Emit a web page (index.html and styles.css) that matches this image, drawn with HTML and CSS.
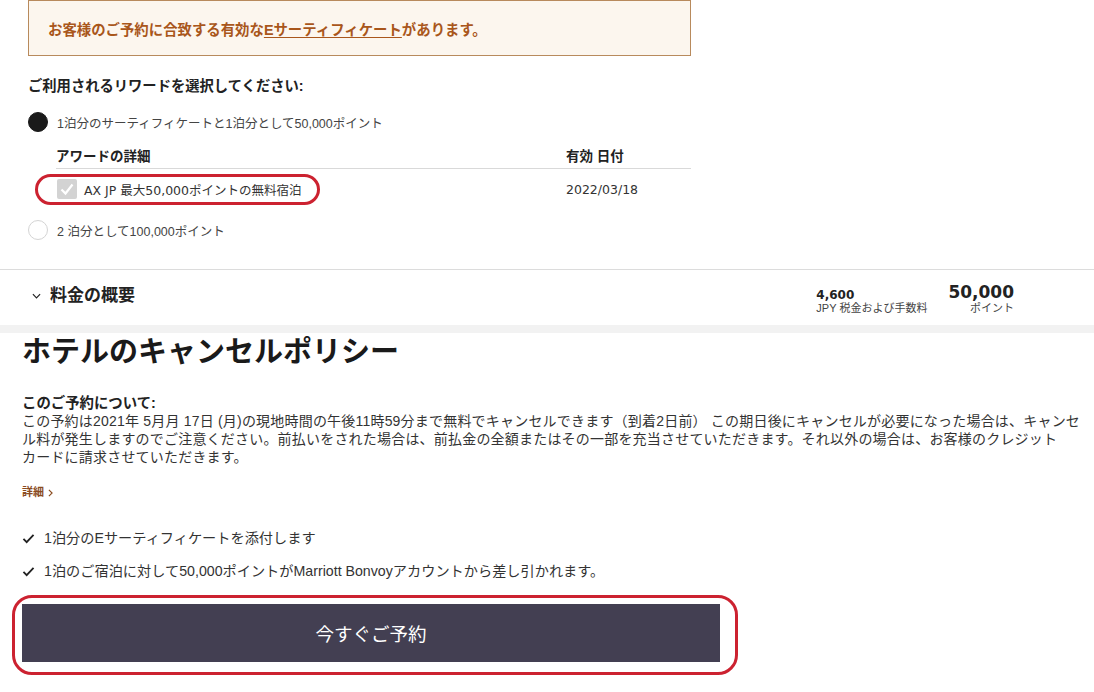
FILE: index.html
```html
<!DOCTYPE html>
<html lang="ja">
<head>
<meta charset="utf-8">
<link rel="stylesheet" href="styles.css">
</head>
<body>
<div class="page">
  <section class="rewards">
    <div class="notice">お客様のご予約に合致する有効な<u>Eサーティフィケート</u>があります。</div>
    <h3 class="choose">ご利用されるリワードを選択してください:</h3>
    <div class="option">
      <span class="radio checked"></span>
      <span class="opt-label">1泊分のサーティフィケートと1泊分として50,000ポイント</span>
    </div>
    <div class="award-table">
      <div class="award-head">
        <span class="col-name">アワードの詳細</span>
        <span class="col-date">有効 日付</span>
      </div>
      <div class="award-row">
        <span class="col-name">
          <span class="cbox"><svg viewBox="0 0 20 20" width="20" height="20"><path d="M4.5 10.5 L8.5 14.5 L15.5 5.5" fill="none" stroke="#fff" stroke-width="2.2"/></svg></span>
          <span class="award-name">AX JP 最大50,000ポイントの無料宿泊</span>
        </span>
        <span class="col-date num">2022/03/18</span>
        <span class="mark mark-row"></span>
      </div>
    </div>
    <div class="option option2">
      <span class="radio"></span>
      <span class="opt-label">2 泊分として100,000ポイント</span>
    </div>
  </section>

  <section class="summary">
    <div class="sum-left">
      <svg class="chev" viewBox="0 0 10 6" width="9" height="6"><path d="M1 1 L5 5 L9 1" fill="none" stroke="#222" stroke-width="1.3"/></svg>
      <span class="sum-title">料金の概要</span>
    </div>
    <div class="sum-right">
      <div class="tax">
        <div class="tax-amt num">4,600</div>
        <div class="tax-lbl">JPY 税金および手数料</div>
      </div>
      <div class="pts">
        <div class="pts-amt num">50,000</div>
        <div class="pts-lbl">ポイント</div>
      </div>
    </div>
  </section>

  <div class="band"></div>

  <section class="policy">
    <h2 class="policy-title">ホテルのキャンセルポリシー</h2>
    <h4 class="about">このご予約について:</h4>
    <p class="policy-text">この予約は2021年 5月月 17日 (月)の現地時間の午後11時59分まで無料でキャンセルできます（到着2日前） この期日後にキャンセルが必要になった場合は、キャンセル料が発生しますのでご注意ください。前払いをされた場合は、前払金の全額またはその一部を充当させていただきます。それ以外の場合は、お客様のクレジット<span class="nw">カード</span>に請求させていただきます。</p>
    <a class="detail">詳細<svg viewBox="0 0 6 10" width="5" height="8"><path d="M1 1 L5 5 L1 9" fill="none" stroke="#8a4b1e" stroke-width="1.4"/></svg></a>
    <ul class="checks">
      <li><svg viewBox="0 0 14 12" width="13" height="11"><path d="M1.5 6.5 L5 10 L12.5 2" fill="none" stroke="#222" stroke-width="2"/></svg><span>1泊分のEサーティフィケートを添付します</span></li>
      <li><svg viewBox="0 0 14 12" width="13" height="11"><path d="M1.5 6.5 L5 10 L12.5 2" fill="none" stroke="#222" stroke-width="2"/></svg><span>1泊のご宿泊に対して50,000ポイントがMarriott Bonvoyアカウントから差し引かれます。</span></li>
    </ul>
    <div class="btn-wrap">
      <button class="book">今すぐご予約</button>
      <span class="mark mark-btn"></span>
    </div>
  </section>
</div>
</body>
</html>
```

FILE: styles.css
```css
* { box-sizing: border-box; }
html, body { margin: 0; padding: 0; background: #fff; }
body {
  font-family: "Liberation Sans", "Noto Sans CJK JP", sans-serif;
  color: #333;
  width: 1094px;
  height: 692px;
  overflow: hidden;
}
.page { width: 1094px; }
.num { font-family: "DejaVu Sans", "Noto Sans CJK JP", sans-serif; }
.nw { white-space: nowrap; }

.rewards { padding: 0 0 0 28px; width: 691px; }
.notice {
  height: 56px;
  border: 1px solid #b88a5c;
  background: #fcf6ee;
  color: #a9561b;
  font-size: 14.4px;
  font-weight: bold;
  display: flex;
  align-items: center;
  padding-left: 19px;
}
.notice u { text-underline-offset: 2px; }
.choose {
  margin: 19px 0 0;
  font-size: 14.3px;
  font-weight: bold;
  color: #222;
  line-height: 22px;
}
.option {
  display: flex;
  align-items: center;
  gap: 9px;
  margin-top: 15px;
  height: 20px;
}
.radio {
  width: 20px; height: 20px;
  border-radius: 50%;
  border: 1px solid #d4d4d4;
  background: #fff;
  flex: none;
}
.radio.checked { background: #1a1a1a; border-color: #1a1a1a; }
.opt-label { font-size: 12.5px; color: #444; }

.award-table { margin-left: 28px; margin-top: 9px; }
.award-head {
  display: flex;
  height: 28px;
  align-items: center;
  border-bottom: 1px solid #d9d9d9;
  font-size: 13.5px;
  font-weight: bold;
  color: #222;
}
.col-name { width: 510px; display: flex; align-items: center; gap: 7px; }
.col-date { flex: 1; }
.award-row {
  position: relative;
  display: flex;
  align-items: center;
  height: 40px;
  font-size: 12.5px;
  color: #333;
}
.award-row .col-name { padding-left: 1px; }
.award-name { font-family: "DejaVu Sans", "Noto Sans CJK JP", sans-serif; font-size: 12.5px; }
.cbox {
  width: 20px; height: 20px;
  background: #d3d3d3;
  border-radius: 2px;
  display: inline-flex;
}
.option2 { margin-top: 11px; }

.mark {
  position: absolute;
  border: 3px solid #cc2230;
  pointer-events: none;
}
.mark-row {
  left: -21px; top: 5px;
  width: 285px; height: 31px;
  border-radius: 16px;
}

.summary {
  margin-top: 29px;
  border-top: 1px solid #dcdcdc;
  height: 56px;
  display: flex;
  justify-content: space-between;
  align-items: flex-start;
  padding: 0 80px 0 32px;
}
.sum-left { display: flex; align-items: center; gap: 9px; margin-top: 11px; }
.chev { margin-top: 4px; }
.sum-title { font-size: 17px; font-weight: bold; color: #222; }
.sum-right { display: flex; align-items: flex-start; gap: 21px; margin-top: 12px; }
.tax { margin-top: 6px; }
.tax-amt { font-size: 12px; font-weight: bold; color: #222; line-height: 14px; }
.tax-lbl { font-size: 11px; color: #444; line-height: 13px; }
.pts { text-align: right; }
.pts-amt { font-size: 17px; font-weight: bold; color: #222; line-height: 20px; }
.pts-lbl { font-size: 11px; color: #444; line-height: 13px; }

.band { height: 8px; background: #f2f2f2; }

.policy { padding: 0 12px 0 22px; }
.policy-title {
  margin: 2px 0 0;
  font-size: 29px;
  font-weight: bold;
  color: #1a1a1a;
  line-height: 34px;
}
.about {
  margin: 25px 0 0;
  font-size: 14.4px;
  font-weight: bold;
  color: #222;
  line-height: 18px;
}
.policy-text {
  margin: 0;
  font-size: 14px;
  line-height: 18px;
  letter-spacing: 0.2px;
  color: #333;
}
.detail {
  display: inline-flex;
  align-items: center;
  gap: 4px;
  margin-top: 17px;
  font-size: 11px;
  font-weight: bold;
  color: #8a4b1e;
}
.detail svg { margin-top: 4px; }
.checks { list-style: none; margin: 27px 0 0; padding: 0; }
.checks li {
  display: flex;
  align-items: center;
  gap: 9px;
  font-size: 14.2px;
  color: #333;
  height: 20px;
  margin-bottom: 13px;
}
.checks li svg { margin-top: 3px; flex: none; }
.btn-wrap { position: relative; width: 698px; margin-top: 24px; }
.book {
  display: block;
  width: 698px;
  height: 58px;
  border: 0;
  background: #433f52;
  color: #fff;
  font-family: "Liberation Sans", "Noto Sans CJK JP", sans-serif;
  font-size: 18.5px;
}
.mark-btn {
  left: -10px; top: -9px;
  width: 726px; height: 80px;
  border-radius: 20px;
}
```
